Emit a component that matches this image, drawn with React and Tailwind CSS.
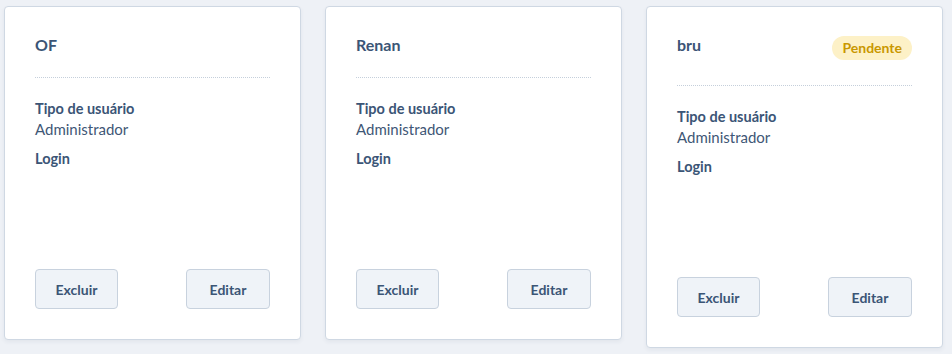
import React from "react";

const users = [
  { name: "OF", type: "Administrador", pending: false },
  { name: "Renan", type: "Administrador", pending: false },
  { name: "bru", type: "Administrador", pending: true },
];

function Card({ u }) {
  return (
    <div className="w-[297px] shrink-0 self-start bg-white border border-[#cfd8e3] rounded-[4px] shadow-[0_2px_4px_rgba(30,50,90,0.06)] px-[30px] pt-[26px] pb-[30px] flex flex-col">
      <div className="flex items-start justify-between">
        <div className="text-[16px] leading-[24px] font-bold text-[#3b5576]">{u.name}</div>
        {u.pending && (
          <div className="mt-[3px] mb-[5px] h-[24px] px-[10px] rounded-full bg-[#fdf1c7] text-[#c99700] text-[14px] font-bold leading-[24px]">
            Pendente
          </div>
        )}
      </div>
      <div className="mt-[20px] border-t border-dotted border-[#c5cfdb]" />
      <div className="mt-[21px] text-[14.5px] leading-[20px] font-bold text-[#3b5576]">Tipo de usuário</div>
      <div className="text-[15px] leading-[20px] text-[#3f5776]">{u.type}</div>
      <div className="mt-[10px] text-[14.5px] leading-[20px] font-bold text-[#3b5576]">Login</div>
      <div className="mt-[100px] flex justify-between">
        <button className="w-[83px] h-[40px] rounded-[4px] border border-[#c8d2de] bg-[#eff3f8] text-[14px] font-bold text-[#3b5576]">
          Excluir
        </button>
        <button className="w-[84px] h-[40px] rounded-[4px] border border-[#c8d2de] bg-[#eff3f8] text-[14px] font-bold text-[#3b5576]">
          Editar
        </button>
      </div>
    </div>
  );
}

export default function App() {
  return (
    <div
      className="w-[952px] h-[354px] bg-[#eef1f6] pl-[4px] pt-[6px] flex gap-[24px] overflow-hidden"
      style={{ fontFamily: "Lato, 'Liberation Sans', sans-serif" }}
    >
      {users.map((u) => (
        <Card key={u.name} u={u} />
      ))}
    </div>
  );
}
